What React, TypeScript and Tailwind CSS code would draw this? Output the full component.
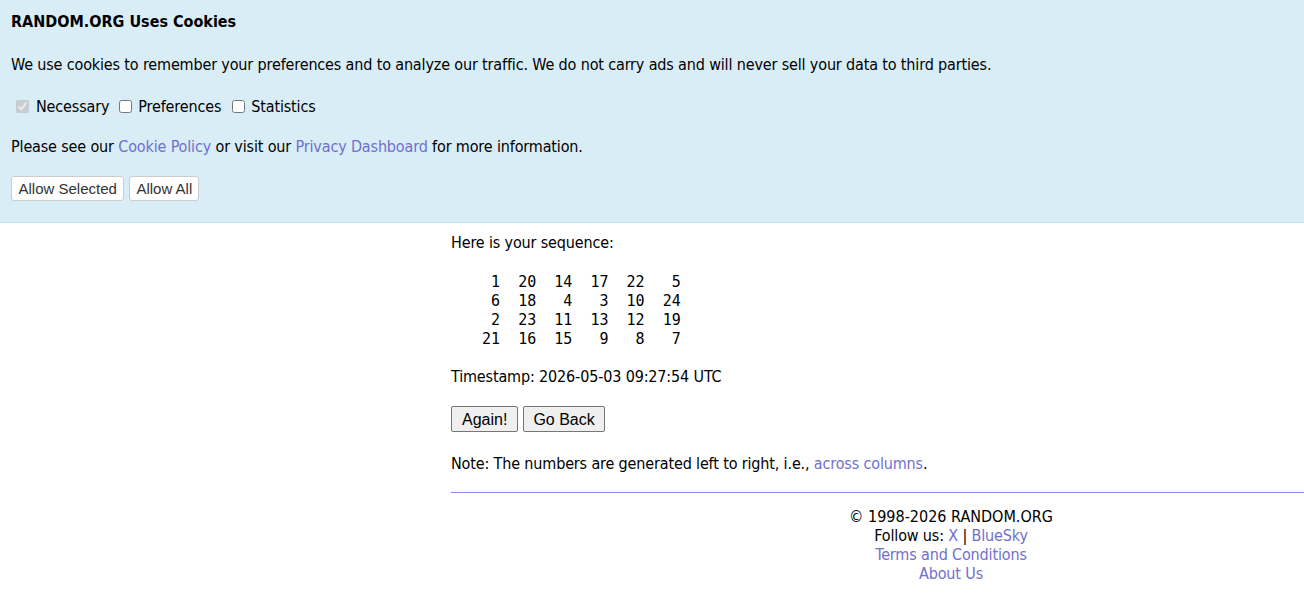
import React from "react";

const rows = [
  [1, 20, 14, 17, 22, 5],
  [6, 18, 4, 3, 10, 24],
  [2, 23, 11, 13, 12, 19],
  [21, 16, 15, 9, 8, 7],
];

const pad = (n: number) => String(n).padStart(4, " ");

export default function App() {
  const text = rows.map((r) => r.map(pad).join("")).join("\n");
  return (
    <div
      className="w-[1304px] h-[612px] overflow-hidden bg-white text-black text-[16px] leading-[19px] tracking-[-0.15px]"
      style={{ fontFamily: '"DejaVu Sans Condensed", Tahoma, "DejaVu Sans", sans-serif' }}
    >
      <div className="bg-[#d9edf7] border-b border-[#bce8f1] px-[11px] pt-[12px] pb-[21px] flex flex-col">
        <div className="font-bold tracking-normal">RANDOM.ORG Uses Cookies</div>
        <div className="mt-[24px]">
          We use cookies to remember your preferences and to analyze our traffic. We do not carry ads and will never sell your data to third parties.
        </div>
        <div className="mt-[23px] flex items-center">
          <input type="checkbox" checked disabled readOnly className="ml-[5px] mr-[7px] w-[13px] h-[13px]" />
          <span>Necessary</span>
          <input type="checkbox" className="ml-[10px] mr-[6px] w-[13px] h-[13px]" />
          <span>Preferences</span>
          <input type="checkbox" className="ml-[11px] mr-[6px] w-[13px] h-[13px]" />
          <span>Statistics</span>
        </div>
        <div className="mt-[21px]">
          Please see our <a className="text-[#6f6fcf]">Cookie Policy</a> or visit our{" "}
          <a className="text-[#6f6fcf]">Privacy Dashboard</a> for more information.
        </div>
        <div className="mt-[20px] flex gap-[5px] tracking-normal">
          <button
            className="h-[25px] px-[6.5px] bg-white border border-[#cccccc] rounded-[3px] text-[#333] text-[15px]"
            style={{ fontFamily: '"Liberation Sans", Arial, sans-serif' }}
          >
            Allow Selected
          </button>
          <button
            className="h-[25px] px-[6px] bg-white border border-[#cccccc] rounded-[3px] text-[#333] text-[15px]"
            style={{ fontFamily: '"Liberation Sans", Arial, sans-serif' }}
          >
            Allow All
          </button>
        </div>
      </div>

      <div className="flex">
        <div className="w-[451px] shrink-0" />
        <div className="w-[1000px] shrink-0 flex flex-col pt-[10px]">
          <div>Here is your sequence:</div>
          <pre
            className="mt-[21px] pl-[13px] text-[15px] leading-[19px] tracking-normal"
            style={{ fontFamily: '"DejaVu Sans Mono", "Liberation Mono", monospace' }}
          >
            {text}
          </pre>
          <div className="mt-[18px]">Timestamp: 2026-05-03 09:27:54 UTC</div>
          <div className="mt-[20px] flex gap-[5px] tracking-normal">
            <button
              className="h-[26px] px-[10px] bg-[#efefef] border border-[#767676] rounded-[2px] text-[16px]"
              style={{ fontFamily: '"Liberation Sans", Arial, sans-serif' }}
            >
              Again!
            </button>
            <button
              className="h-[26px] px-[9px] bg-[#efefef] border border-[#767676] rounded-[2px] text-[16px]"
              style={{ fontFamily: '"Liberation Sans", Arial, sans-serif' }}
            >
              Go Back
            </button>
          </div>
          <div className="mt-[22px]">
            Note: The numbers are generated left to right, i.e., <a className="text-[#6f6fcf]">across columns</a>.
          </div>
          <div className="mt-[19px] border-t border-[#8f8ff0]" />
          <div className="mt-[14px] flex flex-col items-center text-center">
            <div className="tracking-normal">© 1998-2026 RANDOM.ORG</div>
            <div>
              Follow us: <a className="text-[#6f6fcf]">X</a> | <a className="text-[#6f6fcf]">BlueSky</a>
            </div>
            <div className="text-[#6f6fcf]">Terms and Conditions</div>
            <div className="text-[#6f6fcf]">About Us</div>
          </div>
        </div>
      </div>
    </div>
  );
}
